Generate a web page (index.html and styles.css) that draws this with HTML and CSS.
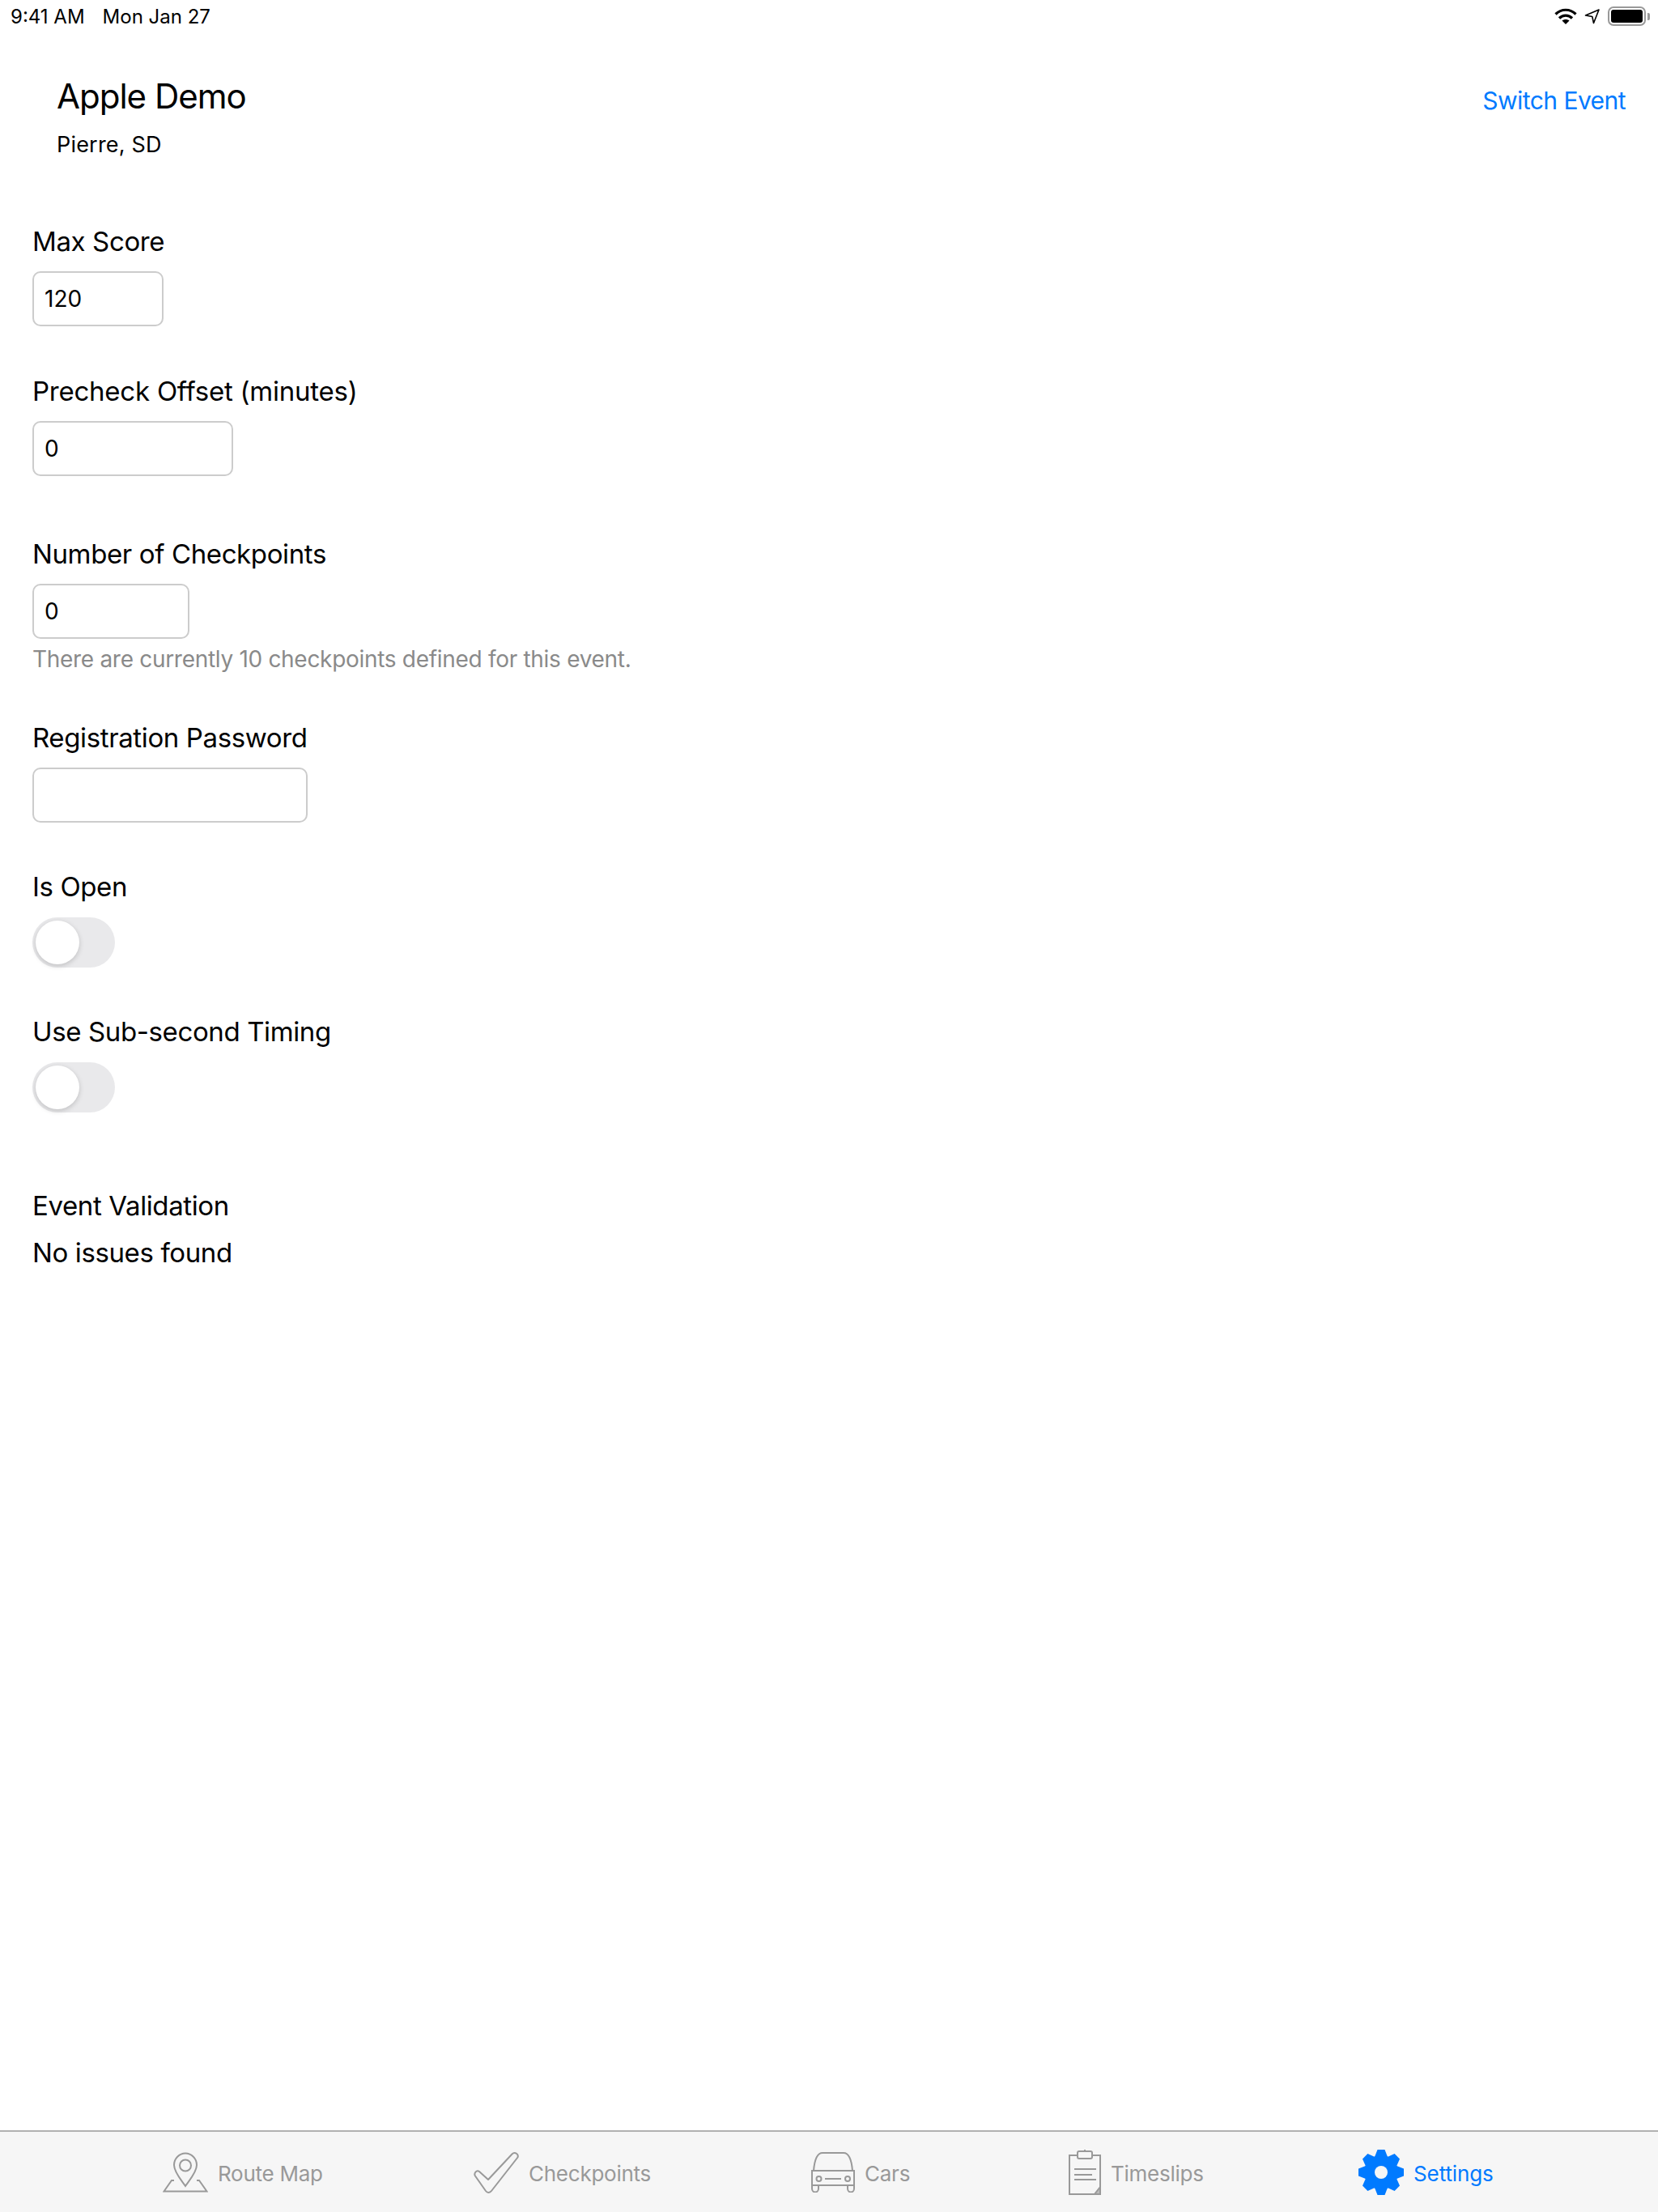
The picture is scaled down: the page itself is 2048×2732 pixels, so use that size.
FILE: index.html
```html
<!DOCTYPE html>
<html>
<head>
    <title>Event Settings</title>
    <link rel="stylesheet" href="styles.css">
</head>
<body>

<div class="status_bar">
    <span class="status_time">9:41 AM</span>
    <span class="status_date">Mon Jan 27</span>
    <span class="status_icons">
        <svg class="icon_wifi" width="28" height="20" viewBox="0 0 28 20">
            <path d="M1.500 7.500C8.500 .5 19.500 .5 26.500 7.500" fill="none" stroke="#000" stroke-width="3.200"/>
            <path d="M6 12.500C10.500 8 17.500 8 22 12.500" fill="none" stroke="#000" stroke-width="3.200"/>
            <path d="M14 20L9.500 15.500C12 13.500 16 13.500 18.500 15.500Z" fill="#000"/>
        </svg>
        <svg class="icon_loc" width="20" height="20" viewBox="0 0 20 20">
            <path d="M1.500 9L18 2 11.500 18.500 9.800 10.500Z" fill="none" stroke="#000" stroke-width="1.600" stroke-linejoin="round"/>
        </svg>
        <span class="battery"><span class="battery_fill"></span></span>
        <span class="battery_cap"></span>
    </span>
</div>

<div class="event_header">
    <div>
        <h1>Apple Demo</h1>
        <div class="event_place">Pierre, SD</div>
    </div>
    <a class="switch_event" href="#">Switch Event</a>
</div>

<div class="form">
    <div class="field field_score">
        <label>Max Score</label>
        <input class="text_input input_score" type="text" value="120">
    </div>
    <div class="field field_precheck">
        <label>Precheck Offset (minutes)</label>
        <input class="text_input input_precheck" type="text" value="0">
    </div>
    <div class="field field_checkpoints">
        <label>Number of Checkpoints</label>
        <input class="text_input input_checkpoints" type="text" value="0">
        <div class="hint">There are currently 10 checkpoints defined for this event.</div>
    </div>
    <div class="field field_password">
        <label>Registration Password</label>
        <input class="text_input input_password" type="text">
    </div>
    <div class="field field_open">
        <label>Is Open</label>
        <div class="toggle"><span class="knob"></span></div>
    </div>
    <div class="field field_timing">
        <label>Use Sub-second Timing</label>
        <div class="toggle"><span class="knob"></span></div>
    </div>
    <div class="field field_validation">
        <label>Event Validation</label>
        <div class="validation_result">No issues found</div>
    </div>
</div>

<div class="tab_bar">
    <a class="tab" href="#">
        <svg width="56" height="50" viewBox="0 0 56 50" fill="none" stroke="#999" stroke-width="2">
            <path d="M28 42C24 36 14 25 14 16C14 8 20.500 1.500 28 1.500C35.500 1.500 42 8 42 16C42 25 32 36 28 42Z"/>
            <circle cx="28" cy="16.500" r="7"/>
            <path d="M14 35H11L1.500 48.500H54.500L45 35H42"/>
        </svg>
        <span>Route Map</span>
    </a>
    <a class="tab" href="#">
        <svg width="56" height="52" viewBox="0 0 56 52" fill="none" stroke="#999" stroke-width="2" stroke-linejoin="round">
            <path d="M18 35L47.500 3.500C50.500 .5 56 3 54.500 7.500L22 49C20 51.500 17 51.500 15 49L2 30.500C0 27.500 3.500 22.500 7 25Z"/>
        </svg>
        <span>Checkpoints</span>
    </a>
    <a class="tab tab_cars" href="#">
        <svg width="56" height="50" viewBox="0 0 56 50" fill="none" stroke="#999" stroke-width="2">
            <path d="M4 23C5 11 8 1 15 1H41C48 1 51 11 52 23"/>
            <path d="M2 23H54V41H2Z"/>
            <circle cx="10.500" cy="33" r="3"/>
            <circle cx="46" cy="33" r="3"/>
            <path d="M18 33H38"/>
            <path d="M2 41V45C2 51 10 51 10 45V41M46 41V45C46 51 54 51 54 45V41"/>
        </svg>
        <span>Cars</span>
    </a>
    <a class="tab" href="#">
        <svg width="40" height="56" viewBox="0 0 40 56" fill="none" stroke="#999" stroke-width="2">
            <path d="M11 7H1V55H39V7H29"/>
            <rect x="11" y="2" width="18" height="9" rx="2"/>
            <path d="M20 0V2"/>
            <path d="M7 24H34M7 31H29M7 37H34"/>
            <path d="M39 46L32 55H39Z" fill="#bbb"/>
        </svg>
        <span>Timeslips</span>
    </a>
    <a class="tab tab_active" href="#">
        <svg width="56" height="56" viewBox="-28 -28 56 56" fill="#007aff">
            <circle r="21"/>
            <path id="tooth" d="M-8 -19L-4.500 -28H4.500L8 -19Z"/>
            <use href="#tooth" transform="rotate(45)"/>
            <use href="#tooth" transform="rotate(90)"/>
            <use href="#tooth" transform="rotate(135)"/>
            <use href="#tooth" transform="rotate(180)"/>
            <use href="#tooth" transform="rotate(225)"/>
            <use href="#tooth" transform="rotate(270)"/>
            <use href="#tooth" transform="rotate(315)"/>
            <circle r="8" fill="#f6f6f6"/>
        </svg>
        <span>Settings</span>
    </a>
</div>

</body>
</html>
```

FILE: styles.css
```css
html, body {
    margin: 0;
    height: 2732px;
    background: #fff;
}

body {
    position: relative;
    font-family: Inter, "Liberation Sans", sans-serif;
    color: #000;
    overflow: hidden;
}

a {
    text-decoration: none;
}

.status_bar {
    display: flex;
    align-items: center;
    height: 40px;
    padding-left: 13px;
    font-size: 24px;
}

.status_date {
    margin-left: 22px;
}

.status_icons {
    display: flex;
    align-items: center;
    margin-left: auto;
    padding-right: 10px;
}

.icon_loc {
    margin-left: 9px;
}

.battery {
    display: block;
    width: 47px;
    height: 24px;
    margin-left: 9px;
    padding: 2px;
    box-sizing: border-box;
    border: 2px solid #999;
    border-radius: 7px;
}

.battery_fill {
    display: block;
    height: 100%;
    background: #000;
    border-radius: 3px;
}

.battery_cap {
    width: 3px;
    height: 9px;
    margin-left: 2px;
    background: #999;
    border-radius: 0 2px 2px 0;
}

.event_header {
    display: flex;
    justify-content: space-between;
    align-items: flex-start;
    padding: 49px 40px 0 70px;
}

h1 {
    margin: 0;
    font-size: 42px;
    font-weight: 400;
    line-height: 60px;
    letter-spacing: -1px;
}

.event_place {
    margin-top: 14px;
    font-size: 27px;
    line-height: 32px;
    letter-spacing: 0.2px;
}

.switch_event {
    margin-top: 17px;
    color: #007aff;
    font-size: 30px;
    line-height: 36px;
    letter-spacing: -0.55px;
}

.form {
    padding: 0 40px;
}

.field label {
    display: block;
    font-size: 33px;
    line-height: 38px;
    letter-spacing: -0.38px;
}

.field_precheck label {
    letter-spacing: -0.24px;
}

.text_input {
    display: block;
    height: 68px;
    margin: 18px 0 0;
    padding: 0 13px;
    box-sizing: border-box;
    border: 2px solid #ccc;
    border-radius: 10px;
    background: #fff;
    font-family: inherit;
    font-size: 28px;
    color: #000;
    outline: none;
}

.input_score { width: 162px; }
.input_precheck { width: 248px; }
.input_checkpoints { width: 194px; }
.input_password { width: 340px; }

.field_score { margin-top: 84px; }
.field_precheck { margin-top: 61px; }
.field_checkpoints { margin-top: 77px; }
.field_password { margin-top: 61px; }
.field_open { margin-top: 60px; }
.field_timing { margin-top: 60px; }
.field_validation { margin-top: 96px; }

.hint {
    margin-top: 8px;
    font-size: 28px;
    line-height: 34px;
    letter-spacing: -0.3px;
    color: #8a8a8a;
}

.toggle {
    width: 102px;
    height: 62px;
    margin-top: 19px;
    padding: 4px;
    box-sizing: border-box;
    border-radius: 31px;
    background: #e9e9eb;
}

.knob {
    display: block;
    width: 54px;
    height: 54px;
    border-radius: 50%;
    background: #fff;
    box-shadow: 0 2px 6px rgba(0, 0, 0, 0.18);
}

.validation_result {
    margin-top: 19px;
    font-size: 33px;
    line-height: 40px;
    letter-spacing: -0.38px;
}

.tab_bar {
    position: absolute;
    left: 0;
    right: 0;
    bottom: 0;
    display: grid;
    grid-template-columns: 384px 416px 319px 358px 1fr;
    align-items: center;
    height: 101px;
    padding-left: 201px;
    box-sizing: border-box;
    border-top: 2px solid #b2b2b2;
    background: #f6f6f6;
}

.tab {
    display: flex;
    align-items: center;
    gap: 12px;
    color: #999;
    font-size: 26px;
    letter-spacing: -0.25px;
}

.tab span {
    padding-top: 3px;
}

.tab_cars {
    gap: 11px;
}

.tab svg {
    flex: none;
}

.tab_active {
    color: #007aff;
    letter-spacing: -0.1px;
}
```
